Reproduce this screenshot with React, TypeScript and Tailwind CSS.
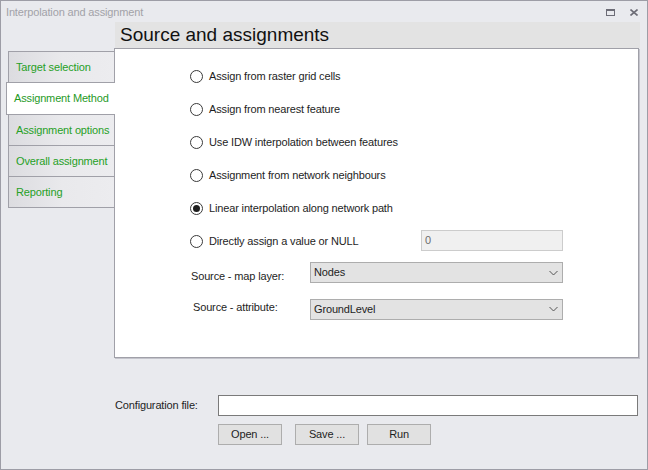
import React from "react";

function Radio({ checked, label }: { checked?: boolean; label: string }) {
  return (
    <div className="h-[33px] flex items-center">
      <div className="w-[13px] h-[13px] rounded-full border border-[#3a3a3a] bg-white flex items-center justify-center shrink-0">
        {checked && <div className="w-[7px] h-[7px] rounded-full bg-[#1e1e1e]" />}
      </div>
      <span className="ml-[6px]">{label}</span>
    </div>
  );
}

function Chevron() {
  return (
    <svg width="9" height="6" viewBox="0 0 9 6" className="shrink-0">
      <polyline points="0.5,1 4.5,5 8.5,1" fill="none" stroke="#555" strokeWidth="1" />
    </svg>
  );
}

function Dropdown({ value }: { value: string }) {
  return (
    <div className="w-[253px] h-[21px] bg-[#e3e3e3] border border-[#adadad] flex items-center pl-[3px] pr-[4px]">
      <span className="flex-1">{value}</span>
      <Chevron />
    </div>
  );
}

function Tab({ label, active }: { label: string; active?: boolean }) {
  if (active) {
    return (
      <div className="relative z-10 ml-[5px] -mr-px h-[33px] -mt-px bg-white border border-r-0 border-[#a0a0a8] flex items-center pl-[7px] text-[#1f9a1f]">
        {label}
      </div>
    );
  }
  return (
    <div className="ml-[7px] h-[32px] bg-gradient-to-r from-[#dcdce0] via-[#e9e9ec] to-[#ececef] border border-r-0 border-[#a0a0a8] -mt-px first:mt-0 flex items-center pl-[7px] text-[#26a026]">
      {label}
    </div>
  );
}

export default function App() {
  return (
    <div className="w-[648px] h-[470px] bg-[#e9eaee] border border-[#9d9da6] flex flex-col font-['Liberation_Sans',Arial,sans-serif] text-[11px] tracking-[-0.15px] text-[#1e1e1e] overflow-hidden">
      {/* title bar */}
      <div className="h-[21px] flex items-center pl-[5px] pr-[9px] text-[#a2a2a8] pt-[2px]">
        <span className="flex-1">Interpolation and assignment</span>
        <svg width="9" height="7" viewBox="0 0 9 7" className="mr-[15px]">
          <rect x="0.5" y="0.5" width="8" height="6" fill="none" stroke="#6c6c76" strokeWidth="1" />
          <rect x="0" y="0" width="9" height="2" fill="#6c6c76" />
        </svg>
        <svg width="8" height="7" viewBox="0 0 8 7">
          <path d="M0.5 0.5 L7.5 6.5 M7.5 0.5 L0.5 6.5" stroke="#6c6c76" strokeWidth="1.6" />
        </svg>
      </div>

      <div className="flex">
        {/* tabs */}
        <div className="w-[113px] pt-[29px] flex flex-col shrink-0">
          <Tab label="Target selection" />
          <Tab label="Assignment Method" active />
          <Tab label="Assignment options" />
          <Tab label="Overall assignment" />
          <Tab label="Reporting" />
        </div>

        {/* right column */}
        <div className="flex-1 mr-[7px] flex flex-col">
          <div className="h-[26px] ml-[1px] bg-[#e3e3e3] flex items-end pl-[5px] pb-[1px]">
            <span className="text-[19px] leading-[24px] tracking-normal text-[#111]">Source and assignments</span>
          </div>
          <div className="h-[310px] mr-[1px] bg-white border border-[#a0a0a8] shadow-[1px_1px_0_#c4c4cc] pl-[75px] pt-[11px]">
            <Radio label="Assign from raster grid cells" />
            <Radio label="Assign from nearest feature" />
            <Radio label="Use IDW interpolation between features" />
            <Radio label="Assignment from network neighbours" />
            <Radio checked label="Linear interpolation along network path" />
            <div className="flex items-center">
              <div className="w-[231px]">
                <Radio label="Directly assign a value or NULL" />
              </div>
              <div className="w-[142px] h-[21px] -mt-[3px] bg-[#f0f0f0] border border-[#cccccc] flex items-center pl-[3px] text-[#6d6d6d]">
                0
              </div>
            </div>
            <div className="mt-[4px] flex items-start">
              <span className="w-[120px] pl-[1px] pt-[6px]">Source - map layer:</span>
              <Dropdown value="Nodes" />
            </div>
            <div className="mt-[14px] flex items-start">
              <span className="w-[120px] pl-[3px]">Source - attribute:</span>
              <Dropdown value="GroundLevel" />
            </div>
          </div>
        </div>
      </div>

      {/* bottom */}
      <div className="mt-[37px] ml-[114px] mr-[9px] flex items-center">
        <span className="w-[103px]">Configuration file:</span>
        <div className="flex-1 h-[21px] bg-white border border-[#7a7a7a]" />
      </div>
      <div className="mt-[8px] ml-[217px] flex">
        <div className="w-[64px] h-[21px] bg-[#e1e1e1] border border-[#adadad] flex items-center justify-center">Open ...</div>
        <div className="ml-[13px] w-[64px] h-[21px] bg-[#e1e1e1] border border-[#adadad] flex items-center justify-center">Save ...</div>
        <div className="ml-[8px] w-[64px] h-[21px] bg-[#e1e1e1] border border-[#adadad] flex items-center justify-center">Run</div>
      </div>
    </div>
  );
}
